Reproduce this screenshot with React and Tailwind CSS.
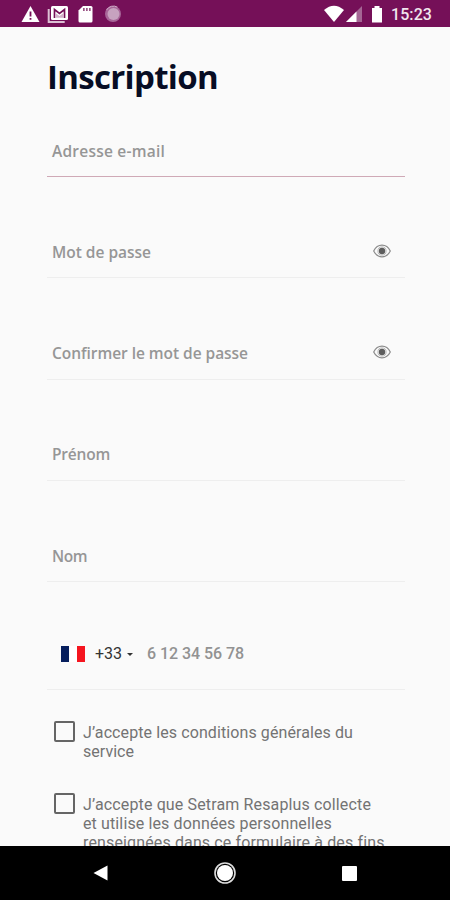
import React, { useState } from 'react';

const FIELDS = [
  { key: 'email', label: 'Adresse e-mail', width: 113, active: true },
  { key: 'password', label: 'Mot de passe', width: 99, secret: true },
  { key: 'confirm', label: 'Confirmer le mot de passe', width: 196, secret: true },
  { key: 'firstName', label: 'Prénom', width: 58 },
  { key: 'lastName', label: 'Nom', width: 35 }
];

export default function App() {
  return (
    <div className="flex h-[900px] w-[450px] flex-col overflow-hidden bg-[#fafafa] font-['Roboto',sans-serif]">
      <StatusBar />

      <main className="min-h-0 flex-1 overflow-hidden pl-[47px] pr-[45px]">
        <h1 className="flex h-[70px] items-end">
          <FitText width={171} className="h-10 text-[33px] font-bold leading-10 text-[#070d24] font-['Open_Sans',sans-serif]">
            Inscription
          </FitText>
        </h1>

        {FIELDS.map((f) => (
          <Field key={f.key} {...f} />
        ))}

        <PhoneField />

        <div className="flex flex-col gap-[32px] pt-[31px]">
          <Consent lines={[['J’accepte les conditions générales du', 270], ['service', 51]]} />
          <Consent
            lines={[
              ['J’accepte que Setram Resaplus collecte', 288],
              ['et utilise les données personnelles', 249],
              ['renseignées dans ce formulaire à des fins', 301]
            ]}
          />
        </div>
      </main>

      <NavigationBar />
    </div>
  );
}

// Single line of text set to a given measure.
function FitText({ width, className, children }) {
  const [spacing, setSpacing] = useState(0);
  const fit = React.useCallback(
    (el) => {
      if (!el) return;
      const gaps = el.textContent.length;
      setSpacing((width - el.getBoundingClientRect().width) / gaps);
    },
    [width]
  );
  return (
    <span className={`block whitespace-nowrap ${className}`}>
      <span ref={fit} style={{ letterSpacing: `${spacing}px` }}>{children}</span>
    </span>
  );
}

function Field({ label, width, active, secret }) {
  return (
    <div
      className={`flex items-end justify-between border-b pb-[13.4px] pl-[5px] pr-[14px] ${
        active ? 'h-[80.2px] border-[#cfa9b6]' : 'h-[101.2px] border-[#eeeeee]'
      }`}
    >
      <FitText width={width} className="h-6 text-[15.5px] font-semibold leading-6 text-[#969696] font-['Open_Sans',sans-serif]">
        {label}
      </FitText>
      {secret && <EyeIcon />}
    </div>
  );
}

function PhoneField() {
  return (
    <div className="flex h-[108px] items-end border-b border-[#eeeeee] pb-[23px] pl-[14px]">
      <div className="mb-1 flex h-4 w-6 justify-between bg-white">
        <span className="w-2 bg-[#061e5d]" />
        <span className="w-2 bg-[#f5151f]" />
      </div>
      <FitText width={27} className="ml-[10px] h-6 text-base leading-6 text-[#333]">+33</FitText>
      <svg className="mb-[10px] ml-[5px] h-[3px] w-[6px]" viewBox="0 0 6 3">
        <path d="M0 0h6L3 3z" fill="#333" />
      </svg>
      <FitText width={97} className="ml-[14px] h-6 text-base font-medium leading-6 text-[#929292]">6 12 34 56 78</FitText>
    </div>
  );
}

function Consent({ lines }) {
  return (
    <div className="flex items-start">
      <span className="ml-[7px] mr-[8px] h-[21px] w-[21px] shrink-0 rounded-[2px] border-2 border-[#656565]" />
      <div className="pt-[2px]">
        {lines.map(([text, width]) => (
          <FitText key={text} width={width} className="h-[19px] text-base leading-[19px] text-[#737373]">
            {text}
          </FitText>
        ))}
      </div>
    </div>
  );
}

function EyeIcon() {
  return (
    <svg className="mb-[6px] h-[14px] w-[18px]" viewBox="0 0 18 14" fill="none">
      <path d="M.7 7C2.6 3.2 5.5 1.2 9 1.2S15.4 3.2 17.3 7c-1.9 3.8-4.8 5.8-8.3 5.8S2.6 10.8.7 7z" stroke="#8b8b8b" strokeWidth="1.2" />
      <circle cx="9" cy="7" r="4.1" stroke="#aaa" strokeWidth=".8" />
      <circle cx="9" cy="7" r="3.2" fill="#5d5d5d" />
    </svg>
  );
}

function StatusBar() {
  return (
    <header className="flex h-[27px] shrink-0 items-start bg-[#751058] pl-[21px] pr-[18px] pt-[5px]">
      <svg className="h-[18px] w-[102px]" viewBox="0 0 102 18">
        <path d="M9.5 1 18.5 17H.5z" fill="#fff" />
        <path d="M8.6 6.5h1.8v5H8.6zM8.6 13h1.8v1.8H8.6z" fill="#751058" />
        {/* Mail */}
        <path d="M27.7 4v13h16" fill="none" stroke="#dcc0d4" strokeWidth="2" />
        <rect x="30" y="1" width="17" height="14" rx="1.5" fill="#fff" />
        <path d="M33.5 13V4.5l5 4 5-4V13" fill="none" stroke="#751058" strokeWidth="1.7" />
        <path d="M34.4 12.8V8l4.1 3 4.1-3v4.8z" fill="#d3b0c9" />
        {/* SD card */}
        <path d="M62 1h8q1.5 0 1.5 1.5V16q0 1.5-1.5 1.5H59q-1.5 0-1.5-1.5V5.5z" fill="#fff" />
        <path d="M62 3h1.7v3H62zM65 3h1.7v3H65zM68 3h1.7v3H68z" fill="#9a5586" />
        <circle cx="92" cy="9" r="8" fill="#a76698" />
        <circle cx="92.5" cy="9" r="6" fill="#c7a2bf" />
        <path d="M85.5 5a8 8 0 0 1 11-2.8" fill="none" stroke="#d1aec9" />
      </svg>
      <svg className="ml-auto h-[18px] w-[60px]" viewBox="0 0 60 18">
        <path d="M1 5Q11-3.5 21 5L11 17z" fill="#fff" />
        <path d="M39 1v16H23z" fill="#a46694" />
        <path d="M33.5 6.5V17H23z" fill="#fff" />
        <path d="M51.5 1h5v2H59v14.5H49V3h2.5z" fill="#fff" />
      </svg>
      <FitText width={41} className="ml-[8px] h-5 text-base font-medium leading-5 text-[#f1e6ee]">15:23</FitText>
    </header>
  );
}

function NavigationBar() {
  return (
    <nav className="flex h-[54px] shrink-0 items-center justify-between bg-black pl-[93px] pr-[93px]">
      <svg className="h-4 w-[15px]" viewBox="0 0 15 16">
        <path d="M14.5.5v15L.5 8z" fill="#fff" />
      </svg>
      <svg className="h-[22px] w-[22px]" viewBox="0 0 22 22">
        <circle cx="11" cy="11" r="10" fill="none" stroke="#ddd" strokeWidth="1.6" />
        <circle cx="11" cy="11" r="8" fill="#fff" />
      </svg>
      <span className="h-[15px] w-[15px] rounded-[1px] bg-white" />
    </nav>
  );
}
